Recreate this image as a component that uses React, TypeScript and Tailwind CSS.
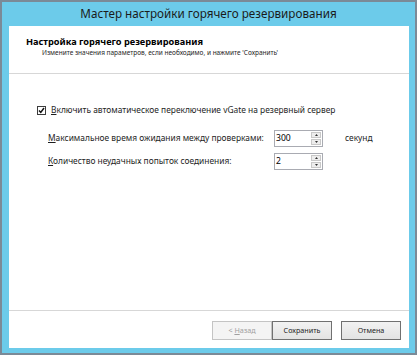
import React from 'react'

function Spinner({ value }: { value: string }) {
  return (
    <div className="flex h-[17px] w-[49px] border border-[#a9abb2] bg-white">
      <div className="flex-1 pl-[1px] text-[8.6px] leading-[15px] text-[#000]">{value}</div>
      <div className="flex w-[11px] flex-col gap-[1px] py-[1px] pr-[1px]">
        <div className="flex flex-1 items-center justify-center border border-[#c8c8c8] bg-[#ededed]">
          <svg width="3" height="2" viewBox="0 0 3 2">
            <path d="M1.5 0L3 2H0z" fill="#333" />
          </svg>
        </div>
        <div className="flex flex-1 items-center justify-center border border-[#c8c8c8] bg-[#ededed]">
          <svg width="3" height="2" viewBox="0 0 3 2">
            <path d="M0 0H3L1.5 2z" fill="#333" />
          </svg>
        </div>
      </div>
    </div>
  )
}

export default function App() {
  return (
    <div className="h-[358px] w-[419px] bg-white" style={{ fontFamily: '"Noto Sans", "Open Sans", sans-serif' }}>
      <div className="flex h-[355px] w-[417px] flex-col border-2 border-[#7b8a97] bg-[#6ccbea]">
        {/* Title bar */}
        <div className="flex h-[24px] items-center justify-center text-[11.7px] text-[#1b1b1b]">
          Мастер настройки горячего резервирования
        </div>

        <div className="flex flex-1 flex-col pb-[5px] pl-[7px] pr-[6px]">
          <div className="flex flex-1 flex-col bg-white">
            {/* Header */}
            <div className="h-[48px] border-b border-[#d7d7d7] pl-[17px] pt-[10px]">
              <div className="text-[9.2px] font-bold leading-[12px] text-[#000]">
                Настройка горячего резервирования
              </div>
              <div className="pl-[16px] text-[6.5px] leading-[10px] text-[#1e1e1e]">
                Измените значения параметров, если необходимо, и нажмите 'Сохранить'
              </div>
            </div>

            {/* Options */}
            <div className="flex h-[237px] flex-col border-b border-[#d7d7d7] pl-[28px] pt-[30px] text-[8.4px] text-[#1e1e1e]">
              <label className="flex h-[12px] items-center gap-[5px] whitespace-nowrap">
                <span className="flex h-[9px] w-[9px] items-center justify-center border border-[#3c3c3c] bg-white">
                  <svg width="7" height="7" viewBox="0 0 7 7">
                    <path d="M1 3.4L2.8 5.4L6 1" stroke="#111" strokeWidth="1.5" fill="none" />
                  </svg>
                </span>
                <span>
                  <span className="underline">В</span>ключить автоматическое переключение vGate на резервный сервер
                </span>
              </label>

              <div className="mt-[14px] flex items-center whitespace-nowrap pl-[11px]">
                <span className="w-[226px]">
                  <span className="underline">М</span>аксимальное время ожидания между проверками:
                </span>
                <Spinner value="300" />
                <span className="pl-[22px]">секунд</span>
              </div>

              <div className="mt-[6px] flex items-center whitespace-nowrap pl-[11px]">
                <span className="w-[226px]">
                  <span className="underline">К</span>оличество неудачных попыток соединения:
                </span>
                <Spinner value="2" />
              </div>
            </div>

            {/* Buttons */}
            <div className="flex flex-1 items-start pl-[203px] pt-[10px] text-[7.2px]">
              <button className="h-[19px] w-[60px] border border-[#c4c4c4] bg-[#f4f4f4] text-[#a0a0a0]">
                &lt; <span className="underline">Н</span>азад
              </button>
              <button className="h-[19px] w-[60px] border border-[#707070] bg-gradient-to-b from-[#f2f2f2] to-[#e3e3e3] text-[#1e1e1e]">
                Сохранить
              </button>
              <button className="ml-[9px] h-[19px] w-[60px] border border-[#707070] bg-gradient-to-b from-[#f2f2f2] to-[#e3e3e3] text-[#1e1e1e]">
                Отмена
              </button>
            </div>
          </div>
        </div>
      </div>
    </div>
  )
}
